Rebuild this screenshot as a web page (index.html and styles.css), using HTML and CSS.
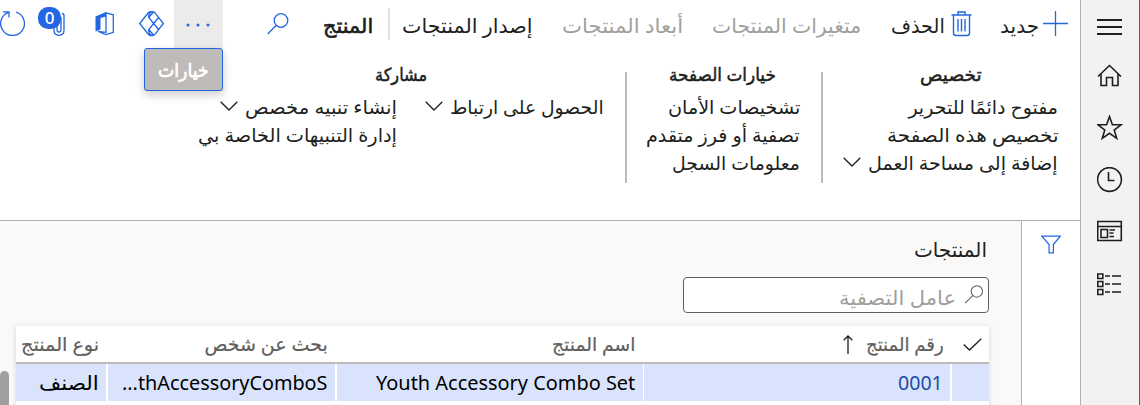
FILE: index.html
```html
<!DOCTYPE html>
<html lang="ar" dir="rtl">
<head>
<meta charset="utf-8">
<title>المنتجات</title>
<link rel="stylesheet" href="styles.css">
</head>
<body>
<div class="app">
  <nav class="rail">
    <svg class="rail-icon" viewBox="0 0 26 26"><path d="M0 9h25M0 16h25M0 23h25" stroke-width="2"/></svg>
    <svg class="rail-icon" viewBox="0 0 26 26"><path d="M1 13.500L12.500 2.500L24 13.500M4 11V22.500H9.500V14.500H15.500V22.500H21V11"/></svg>
    <svg class="rail-icon" viewBox="0 0 26 26"><path d="M12.500 1.500L15.400 9.800H24L17.200 15L19.700 23.300L12.500 18.300L5.300 23.300L7.800 15L1 9.800H9.600Z"/></svg>
    <svg class="rail-icon" viewBox="0 0 26 26"><circle cx="12.500" cy="12.500" r="11.900"/><path d="M11.500 5V13.500H17.500"/></svg>
    <svg class="rail-icon" viewBox="0 0 26 26"><path d="M.7 2.500H24.300V21.500H.7ZM.7 7.500H24.300M4 10.500H10.500V18.500H4ZM12.500 11H18M12.500 14H16.500M12.500 17.500H17"/></svg>
    <svg class="rail-icon" viewBox="0 0 26 26"><path d="M.8 3H5.800V7.500H.8ZM.8 10.500H5.800V15.500H.8ZM.8 18.500H5.800V23.500H.8ZM8 5H13M15 5H24M8 13H13M15 13H24M8 21H13M15 21H24"/></svg>
  </nav>
  <main class="main">
    <header class="toolbar">
      <svg class="icon plus" viewBox="0 0 25 25"><path d="M12.500 0V25M0 12.500H25"/></svg>
      <span class="cmd new"><span class="fit">جديد</span></span>
      <svg class="icon trash" viewBox="0 0 21 26"><path d="M.5 4H20.500M7 4V1H14V4M2.500 4V22Q2.500 24.500 5 24.500H16Q18.500 24.500 18.500 22V4M7 8V20.500M10.500 8V20.500M14 8V20.500" stroke-width="1.4"/></svg>
      <span class="cmd delete"><span class="fit">الحذف</span></span>
      <span class="cmd variants off"><span class="fit">متغيرات المنتجات</span></span>
      <span class="cmd dimensions off"><span class="fit">أبعاد المنتجات</span></span>
      <span class="cmd release"><span class="fit">إصدار المنتجات</span></span>
      <span class="bar"></span>
      <span class="cmd product"><span class="fit">المنتج</span></span>
      <svg class="icon search" viewBox="0 0 22 22"><circle cx="14" cy="7.500" r="6.800"/><path d="M9 12.500L.7 21"/></svg>
      <div class="more">
        <svg class="dots" viewBox="0 0 24 4"><circle cx="2" cy="2" r="1.500"/><circle cx="12" cy="2" r="1.500"/><circle cx="22" cy="2" r="1.500"/></svg>
        <div class="tooltip"><span class="tip-text"><span class="fit">خيارات</span></span></div>
      </div>
      <svg class="icon apps" viewBox="0 0 25 26"><path d="M.7 12.500L9.500 1.500Q10.500 .7 12 .7H13.500Q15 .7 16 1.800L24.300 12.500L16 23.300Q15 24.500 13.500 24.500H12Q10.500 24.500 9.500 23.500ZM14.500 1L9.800 6.500L19.500 18.500M19.500 6.500L9.800 18.500L14.500 24M12.500 1Q9 3 9.800 6.500M12.500 24.300Q9 22 9.800 18.500"/></svg>
      <svg class="icon office" viewBox="0 0 20 24"><path class="solid" d="M.5 4.500L11 0V4.500L5.500 6V17.500L.5 19.500Z"/><path d="M11 .8L18.300 2.800V20.300L11 22.600L3 19.500L11 20.300Z"/></svg>
      <div class="attach">
        <svg class="icon clip" viewBox="0 0 12 24"><path d="M1 8V18Q1 23.300 6 23.300T11 18V3.500Q11 1.500 9 1.500M4 8V17.500Q4 20 6 20T8 17.500V5"/></svg>
        <span class="badge">0</span>
      </div>
      <svg class="icon refresh" viewBox="0 0 25 25"><path d="M16 1.200A11.900 11.900 0 1 1 8.500 1.400M3 .8H9V6.500"/></svg>
    </header>
    <section class="options">
      <div class="group personalize">
        <h2 class="w62"><span class="fit">تخصيص</span></h2>
        <div class="line"><span class="w150"><span class="fit">مفتوح دائمًا للتحرير</span></span></div>
        <div class="line"><span class="w171"><span class="fit">تخصيص هذه الصفحة</span></span></div>
        <div class="line"><span class="w190"><span class="fit">إضافة إلى مساحة العمل</span></span><svg class="chev" viewBox="0 0 18 10"><path d="M.7 .7L9 9L17.300 .7"/></svg></div>
      </div>
      <div class="group page">
        <h2 class="w107"><span class="fit">خيارات الصفحة</span></h2>
        <div class="line"><span class="w132"><span class="fit">تشخيصات الأمان</span></span></div>
        <div class="line"><span class="w154"><span class="fit">تصفية أو فرز متقدم</span></span></div>
        <div class="line"><span class="w128"><span class="fit">معلومات السجل</span></span></div>
      </div>
      <div class="group share">
        <h2 class="w52"><span class="fit">مشاركة</span></h2>
        <div class="pair">
          <div class="link-col">
            <div class="line"><span class="w154"><span class="fit">الحصول على ارتباط</span></span><svg class="chev" viewBox="0 0 18 10"><path d="M.7 .7L9 9L17.300 .7"/></svg></div>
          </div>
          <div class="alert-col">
            <div class="line"><span class="w152"><span class="fit">إنشاء تنبيه مخصص</span></span><svg class="chev" viewBox="0 0 18 10"><path d="M.7 .7L9 9L17.300 .7"/></svg></div>
            <div class="line"><span class="w199"><span class="fit">إدارة التنبيهات الخاصة بي</span></span></div>
          </div>
        </div>
      </div>
    </section>
    <section class="content">
      <aside class="filter-pane"><svg class="icon funnel" viewBox="0 0 21 19"><path d="M.8 .8H20.200L13 9.500V18.200H8.500V9.500Z"/></svg></aside>
      <div class="list">
        <h1><span class="fit">المنتجات</span></h1>
        <div class="filter">
          <svg class="icon find" viewBox="0 0 20 20"><circle cx="13" cy="6.800" r="6"/><path d="M8.700 11.200L.7 19"/></svg>
          <span class="placeholder"><span class="fit">عامل التصفية</span></span>
        </div>
        <div class="grid">
          <div class="row head">
            <div class="cell"><svg class="check" viewBox="0 0 19 13"><path d="M.7 6.500L6.500 12L18.300 .7"/></svg></div>
            <div class="cell"><span class="w78"><span class="fit">رقم المنتج</span></span><svg class="sort" viewBox="0 0 10 19"><path d="M5 19V1M.7 5.300L5 1L9.300 5.300"/></svg></div>
            <div class="cell"><span class="w84"><span class="fit">اسم المنتج</span></span></div>
            <div class="cell"><span class="w123"><span class="fit">بحث عن شخص</span></span></div>
            <div class="cell"><span class="w78"><span class="fit">نوع المنتج</span></span></div>
          </div>
          <div class="row data">
            <div class="cell"></div>
            <div class="cell id"><span class="w45"><span class="fit">0001</span></span></div>
            <div class="cell"><span class="w259"><span class="fit">Youth Accessory Combo Set</span></span></div>
            <div class="cell"><span class="w205"><span class="fit">thAccessoryComboS...</span></span></div>
            <div class="cell"><span class="w60"><span class="fit">الصنف</span></span></div>
          </div>
        </div>
        <div class="scroll-thumb"></div>
      </div>
    </section>
  </main>
</div>
<script src="fit.js"></script>
</body>
</html>
```
FILE: styles.css
```css
* { box-sizing: border-box; }
body { margin: 0; overflow: hidden; background: #fff; color: #201f1e; font-family: "Noto Sans", "DejaVu Sans", sans-serif; font-size: 18px; }
h1, h2 { margin: 0; }
svg { display: block; flex: none; fill: none; stroke: currentColor; stroke-width: 1.3; }
.fit { display: inline-block; white-space: nowrap; transform-origin: right center; }
.app { display: flex; width: 1140px; height: 405px; overflow: hidden; }
.rail { width: 60px; flex: none; background: #f3f2f1; border-left: 1px solid #b3b0ad; border-right: 1px solid #605e5c; padding: 10.500px 16px 0 0; display: flex; flex-direction: column; gap: 26px; }
.rail-icon { width: 26px; height: 26px; stroke-width: 1.6; }
.main { width: 1080px; height: 405px; display: flex; flex-direction: column; }

.toolbar { display: flex; height: 48px; flex: none; padding-right: 12px; align-items: flex-start; }
.icon { color: #2266e3; }
.cmd { display: block; flex: none; height: 48px; line-height: 30px; padding-top: 11px; font-size: 20px; }
.off { color: #a19f9d; }
.plus { width: 25px; height: 25px; margin: 11px 0 0 4px; }
.new { width: 39px; }
.trash { width: 21px; height: 26px; margin: 11px 28px 0 6px; }
.delete { width: 54px; }
.variants { width: 149px; margin-right: 30px; }
.dimensions { width: 121px; margin-right: 29px; }
.release { width: 131px; margin-right: 29px; }
.bar { width: 2px; height: 32px; margin: 8px 12px 0 15px; background: #e1dfdd; }
.product { width: 50px; -webkit-text-stroke: .6px currentColor; }
.search { width: 22px; height: 22px; margin: 13px 34px 0 44px; }
.more { position: relative; width: 49px; height: 48px; flex: none; background: #edebe9; padding: 23px 13px 0 0; }
.dots { width: 24px; height: 4px; fill: #2266e3; stroke: none; }
.tooltip { position: absolute; right: 0; top: 48px; width: 79px; height: 43px; border: 1px solid #2266e3; border-radius: 3px; background: #bebbb8; color: #fff; box-shadow: 0 4px 10px rgba(0,0,0,.2); padding: 8px 13px 0; font-size: 19px; -webkit-text-stroke: .7px currentColor; line-height: 27px; }
.tip-text { display: block; width: 51px; }
.apps { width: 25px; height: 26px; margin: 11px 10px 0 24px; }
.office { width: 20px; height: 24px; margin-top: 12px; }
.office .solid { fill: #2266e3; stroke: none; }
.attach { position: relative; width: 27px; height: 40px; margin: 0 30px 0 13px; flex: none; }
.clip { width: 12px; height: 24px; margin-top: 12px; }
.badge { position: absolute; left: 0; top: 7px; width: 23px; height: 22px; border-radius: 10px; background: #2266e3; color: #fff; font-size: 17px; font-weight: 500; line-height: 22px; text-align: center; }
.refresh { width: 25px; height: 25px; margin-top: 11px; }

.options { display: flex; height: 172px; flex: none; padding-top: 14px; }
.group { height: 121px; display: flex; flex-direction: column; }
.group h2 { display: block; height: 31px; line-height: 24px; font-size: 18px; font-weight: 400; -webkit-text-stroke: .5px currentColor; align-self: center; }
.line { display: flex; height: 28px; line-height: 28px; font-size: 19px; }
.line > span { display: block; flex: none; }
.chev { width: 18px; height: 10px; margin: 8px 7px 0 0; }
.personalize { width: 215px; margin-right: 22px; }
.page { width: 155px; margin-right: 43px; position: relative; }
.share { width: 406px; margin-right: 41px; position: relative; }
.page::before, .share::before { content: ""; position: absolute; top: 10px; width: 2px; height: 111px; background: #bebbb8; right: -23px; }
.pair { display: flex; justify-content: space-between; }
.link-col { width: 179px; }
.alert-col { width: 199px; }

.content { flex: 1; display: flex; border-top: 1px solid #b3b0ad; background: #faf9f8; }
.filter-pane { width: 59px; flex: none; background: #fff; border-left: 1px solid #b3b0ad; padding: 14px 19px 0 0; }
.funnel { width: 20px; height: 19px; }
.list { position: relative; width: 1021px; padding: 14px 32px 0 16px; }
h1 { width: 73px; height: 42px; margin-right: 2px; font-size: 20px; line-height: 30px; font-weight: 400; }
.filter { width: 306px; height: 36px; display: flex; border: 1px solid #605e5c; border-radius: 4px; background: #fff; padding: 7px 4px 0; }
.find { width: 20px; height: 19px; color: #605e5c; stroke-width: 1.1; margin-left: 8px; }
.placeholder { display: block; width: 117px; color: #a19f9d; font-size: 20px; line-height: 26px; height: 28px; }
.grid { margin-top: 13px; background: #fff; box-shadow: 0 1px 5px rgba(0,0,0,.15); height: 90px; }
.row { display: grid; grid-template-columns: 37px 306px 306px 227px 90px; column-gap: 1.750px; }
.head { height: 38px; border-bottom: 2px solid #bebbb8; color: #605e5c; }
.cell { display: flex; padding-right: 7px; line-height: 38px; font-size: 19px; overflow: hidden; }
.head .cell { line-height: 36px; -webkit-text-stroke: .2px currentColor; }
.cell > span { display: block; flex: none; }
.data .cell { height: 37px; background: #d9e4fc; color: #000; font-size: 20px; }
.data .id { color: #1d4ba8; }
.check { width: 19px; height: 13px; margin-top: 12px; color: #201f1e; }
.sort { width: 10px; height: 19px; margin: 9px 12px 0 0; color: #201f1e; }
.scroll-thumb { position: absolute; left: 0; top: 150px; width: 9px; height: 50px; border-radius: 5px 5px 0 0; background: #a19f9d; }

.w45 { width: 45px; }
.w52 { width: 52px; }
.w60 { width: 60px; }
.w62 { width: 62px; }
.w78 { width: 78px; }
.w84 { width: 84px; }
.w107 { width: 107px; }
.w123 { width: 123px; }
.w128 { width: 128px; }
.w132 { width: 132px; }
.w150 { width: 150px; }
.w152 { width: 152px; }
.w154 { width: 154px; }
.w171 { width: 171px; }
.w190 { width: 190px; }
.w199 { width: 199px; }
.w205 { width: 205px; }
.w259 { width: 259px; }
```
FILE: fit.js
```js
// Condense or widen each label so that it fills its slot.
document.querySelectorAll('.fit').forEach(function (label) {
  var slot = label.parentElement;
  var style = getComputedStyle(slot);
  var width = slot.clientWidth - parseFloat(style.paddingLeft) - parseFloat(style.paddingRight);
  label.style.transform = 'scaleX(' + width / label.offsetWidth + ')';
});
```
